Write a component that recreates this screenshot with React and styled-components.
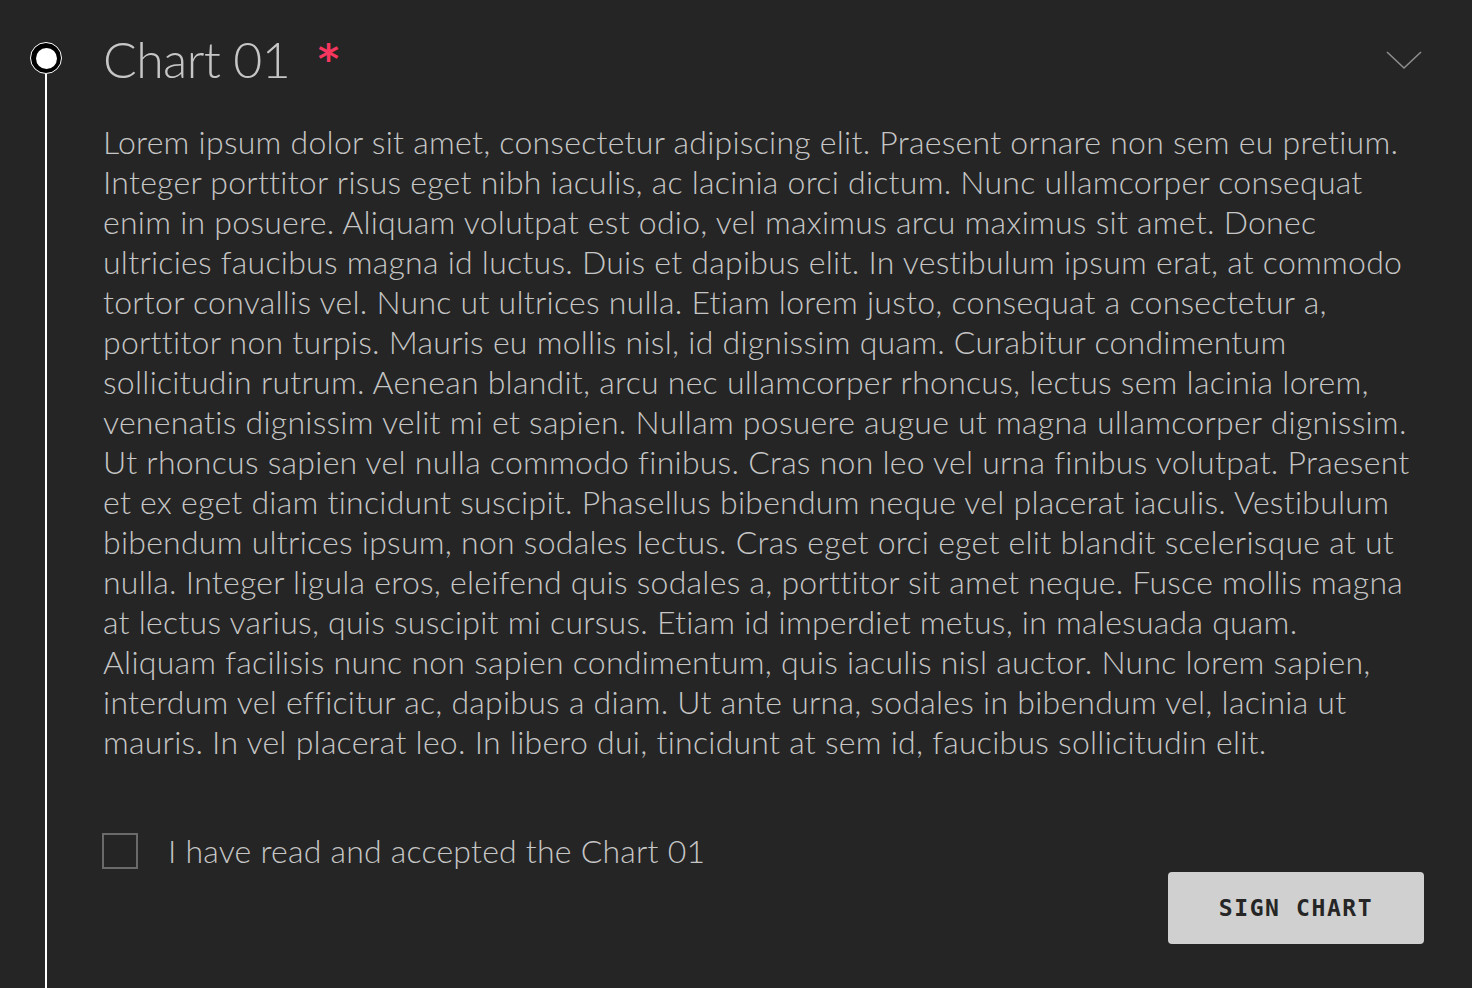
import React from 'react'
import styled, { createGlobalStyle } from 'styled-components'

const GlobalStyle = createGlobalStyle`
  html, body {
    margin: 0;
    padding: 0;
    background: #252525;
  }
  body {
    font-family: Lato, "Liberation Sans", sans-serif;
  }
`

const Page = styled.div`
  display: grid;
  grid-template-columns: 92px 1fr;
  min-height: 988px;
  background: #252525;
`

const Rail = styled.div`
  display: flex;
  flex-direction: column;
  align-items: center;
  padding-top: 42px;
`

const Node = styled.div`
  box-sizing: border-box;
  width: 32px;
  height: 32px;
  border-radius: 50%;
  background: #000;
  border: 1.5px solid #fff;
  display: flex;
  align-items: center;
  justify-content: center;

  &::after {
    content: '';
    width: 21px;
    height: 21px;
    border-radius: 50%;
    background: #fff;
  }
`

const Track = styled.div`
  flex: 1;
  width: 2px;
  background: #fff;
`

const Content = styled.div`
  padding: 28px 48px 0 11px;
  display: flex;
  flex-direction: column;
`

const Header = styled.div`
  display: flex;
  align-items: flex-start;
  justify-content: space-between;
`

const Title = styled.h1`
  margin: 0;
  font-weight: 300;
  font-size: 50px;
  letter-spacing: -0.6px;
  line-height: 62px;
  color: #c6c6c6;
  display: flex;
  align-items: flex-start;
`

const Required = styled.span`
  color: #f7375f;
  font-family: "DejaVu Sans", sans-serif;
  font-weight: 700;
  font-size: 40px;
  line-height: 42px;
  margin-left: 28px;
  margin-top: 10px;
`

const Chevron = styled.svg`
  margin-top: 23px;
  margin-right: 2px;
`

const Body = styled.p`
  margin: 32px 0 0;
  font-weight: 300;
  font-size: 32px;
  letter-spacing: 0.26px;
  line-height: 40px;
  color: #c6c6c6;
`

const Line = styled.span`
  display: block;
  white-space: nowrap;
`

const Footer = styled.div`
  display: flex;
  flex-direction: column;
  margin-top: 69px;
`

const Check = styled.label`
  display: flex;
  align-items: center;
  gap: 30px;
  font-weight: 300;
  font-size: 32px;
  letter-spacing: 0.22px;
  color: #c6c6c6;
  cursor: pointer;
`

const Box = styled.span`
  box-sizing: border-box;
  width: 36px;
  height: 36px;
  border: 2px solid #6a6a6a;
  margin-left: -1px;
`

const SignButton = styled.button`
  align-self: flex-end;
  margin-top: 2px;
  width: 256px;
  height: 72px;
  border: none;
  border-radius: 4px;
  background: #d0d0d0;
  color: #262626;
  font-family: "DejaVu Sans Mono", "Liberation Mono", monospace;
  font-weight: 700;
  font-size: 23px;
  letter-spacing: 1.6px;
  cursor: pointer;
`

const lines = [
  'Lorem ipsum dolor sit amet, consectetur adipiscing elit. Praesent ornare non sem eu pretium.',
  'Integer porttitor risus eget nibh iaculis, ac lacinia orci dictum. Nunc ullamcorper consequat',
  'enim in posuere. Aliquam volutpat est odio, vel maximus arcu maximus sit amet. Donec',
  'ultricies faucibus magna id luctus. Duis et dapibus elit. In vestibulum ipsum erat, at commodo',
  'tortor convallis vel. Nunc ut ultrices nulla. Etiam lorem justo, consequat a consectetur a,',
  'porttitor non turpis. Mauris eu mollis nisl, id dignissim quam. Curabitur condimentum',
  'sollicitudin rutrum. Aenean blandit, arcu nec ullamcorper rhoncus, lectus sem lacinia lorem,',
  'venenatis dignissim velit mi et sapien. Nullam posuere augue ut magna ullamcorper dignissim.',
  'Ut rhoncus sapien vel nulla commodo finibus. Cras non leo vel urna finibus volutpat. Praesent',
  'et ex eget diam tincidunt suscipit. Phasellus bibendum neque vel placerat iaculis. Vestibulum',
  'bibendum ultrices ipsum, non sodales lectus. Cras eget orci eget elit blandit scelerisque at ut',
  'nulla. Integer ligula eros, eleifend quis sodales a, porttitor sit amet neque. Fusce mollis magna',
  'at lectus varius, quis suscipit mi cursus. Etiam id imperdiet metus, in malesuada quam.',
  'Aliquam facilisis nunc non sapien condimentum, quis iaculis nisl auctor. Nunc lorem sapien,',
  'interdum vel efficitur ac, dapibus a diam. Ut ante urna, sodales in bibendum vel, lacinia ut',
  'mauris. In vel placerat leo. In libero dui, tincidunt at sem id, faucibus sollicitudin elit.',
]

export default function App() {
  return (
    <>
      <GlobalStyle />
      <Page>
        <Rail>
          <Node />
          <Track />
        </Rail>
        <Content>
          <Header>
            <Title>
              Chart 01
              <Required>*</Required>
            </Title>
            <Chevron width="36" height="20" viewBox="0 0 36 20" fill="none">
              <path d="M1 1 L18 17 L35 1" stroke="#8d8d8d" strokeWidth="1.6" />
            </Chevron>
          </Header>
          <Body>
            {lines.map((l, i) => (
              <Line key={i}>{l}</Line>
            ))}
          </Body>
          <Footer>
            <Check>
              <Box />
              I have read and accepted the Chart 01
            </Check>
            <SignButton>SIGN CHART</SignButton>
          </Footer>
        </Content>
      </Page>
    </>
  )
}
